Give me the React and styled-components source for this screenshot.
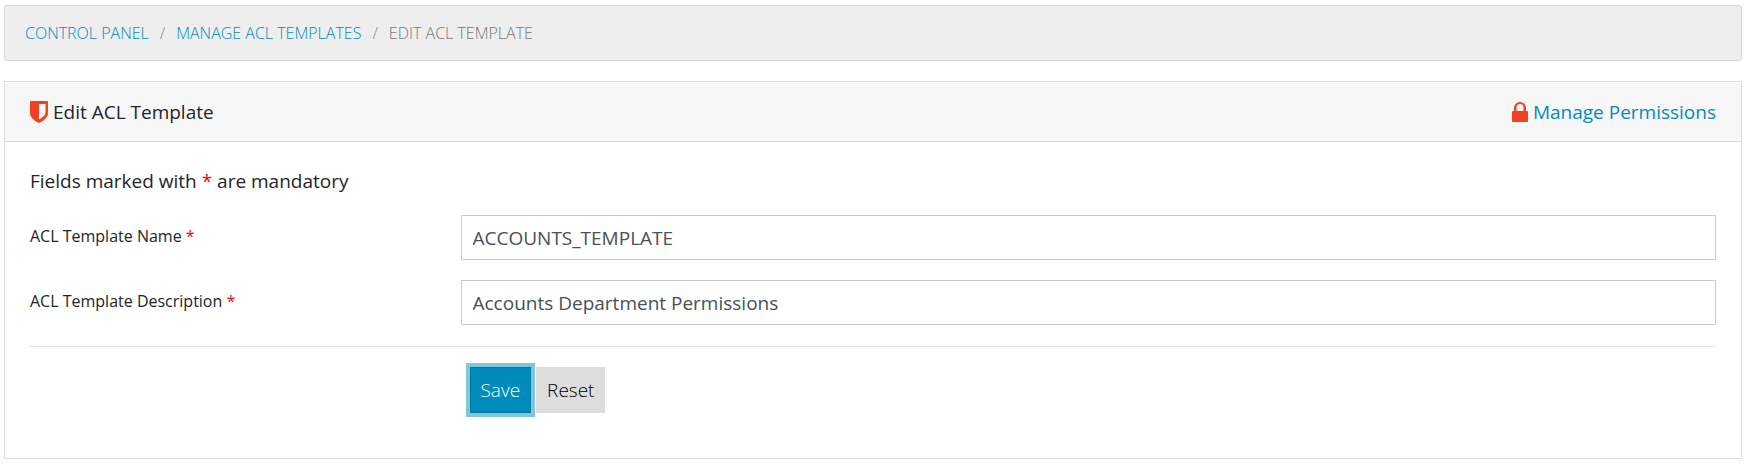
import styled, { createGlobalStyle } from 'styled-components';

const GlobalStyle = createGlobalStyle`
  * {
    box-sizing: border-box;
  }

  body {
    margin: 0;
    background: #fff;
    color: #212529;
    font-family: 'Open Sans', sans-serif;
    font-size: 19px;
    line-height: 30px;
  }

  a {
    color: #008cba;
    text-decoration: none;
  }
`;

const Page = styled.main`
  padding: 5px 6px 7px 4px;
`;

const Breadcrumb = styled.ol`
  display: flex;
  list-style: none;
  margin: 0 0 20px;
  padding: 15px 20px;
  background: #eee;
  border: 1px solid #d8d8d8;
  border-radius: 3px;
  font-size: 16px;
  font-weight: 300;
  line-height: 24px;
  text-transform: uppercase;
  color: #777;
`;

const Crumb = styled.li`
  & + &::before {
    content: '/';
    padding: 0 11px;
    color: #888;
  }
`;

const Panel = styled.section`
  border: 1px solid #ddd;
`;

const PanelHeader = styled.header`
  display: flex;
  justify-content: space-between;
  align-items: center;
  padding: 15px 25px 14px;
  background: #f7f7f7;
  border-bottom: 1px solid #d8d8d8;
  box-shadow: inset 0 1px 0 #fff;
`;

const Title = styled.h1`
  display: flex;
  align-items: center;
  gap: 5px;
  margin: 0;
  font-size: 19px;
  font-weight: 400;
`;

const HeaderLink = styled.a`
  display: flex;
  align-items: center;
  gap: 5px;
`;

const PanelBody = styled.form`
  padding: 24px 25px 25px;
`;

const Note = styled.p`
  margin: 0 0 19px;
`;

const Required = styled.span`
  color: #f00;
`;

const Row = styled.div`
  display: grid;
  grid-template-columns: 1fr 3fr;
  column-gap: 12px;
  align-items: start;
  margin-bottom: 20px;
`;

const Label = styled.label`
  padding-top: 9px;
  font-size: 16px;
  line-height: 24px;
`;

const Input = styled.input`
  width: 100%;
  height: 45px;
  padding: 0 11px;
  border: 1px solid #ccc;
  border-radius: 0;
  background: #fff;
  color: #495057;
  font: inherit;
`;

const Divider = styled.hr`
  margin: 21px 0 20px;
  border: 0;
  border-top: 1px solid #e5e5e5;
`;

const Actions = styled.div`
  grid-column: 2;
  display: flex;
  gap: 5px;
  padding-left: 9px;
`;

const Button = styled.button`
  height: 46px;
  padding: 0 10px;
  border: 1px solid ${({ $primary }) => ($primary ? '#0079a1' : '#ddd')};
  background: ${({ $primary }) => ($primary ? '#008cba' : '#ddd')};
  box-shadow: ${({ $primary }) => ($primary ? '0 0 0 4px #80c6dd' : 'none')};
  color: ${({ $primary }) => ($primary ? '#fff' : '#000')};
  font: inherit;
  font-weight: 300;
  cursor: pointer;
`;

const ShieldIcon = () => (
  <svg width="18" height="22" viewBox="0 0 18 22" fill="#f04124" aria-hidden="true">
    <path
      fillRule="evenodd"
      d="M1 0h16a1 1 0 0 1 1 1v11c0 4-3.500 7.500-9 10C3.500 19.500 0 16 0 12V1a1 1 0 0 1 1-1zM9 3v15.500c4-2.200 6.500-4.500 6.500-7V3z"
    />
  </svg>
);

const LockIcon = () => (
  <svg width="16" height="20" viewBox="0 0 16 20" fill="#f04124" aria-hidden="true">
    <path
      fillRule="evenodd"
      d="M2 9V6a6 6 0 0 1 12 0v3h1a1 1 0 0 1 1 1v9a1 1 0 0 1-1 1H1a1 1 0 0 1-1-1v-9a1 1 0 0 1 1-1zM4.500 9h7V5.500a3.500 3.500 0 0 0-7 0z"
    />
  </svg>
);

const crumbs = [
  { label: 'Control Panel', href: '#control-panel' },
  { label: 'Manage ACL Templates', href: '#acl-templates' },
  { label: 'Edit ACL Template' },
];

const fields = [
  { id: 'name', label: 'ACL Template Name', value: 'ACCOUNTS_TEMPLATE' },
  { id: 'description', label: 'ACL Template Description', value: 'Accounts Department Permissions' },
];

export default function App() {
  return (
    <>
      <GlobalStyle />
      <Page>
        <nav aria-label="Breadcrumb">
          <Breadcrumb>
            {crumbs.map(({ label, href }) => (
              <Crumb key={label}>{href ? <a href={href}>{label}</a> : label}</Crumb>
            ))}
          </Breadcrumb>
        </nav>

        <Panel>
          <PanelHeader>
            <Title>
              <ShieldIcon />
              Edit ACL Template
            </Title>
            <HeaderLink href="#permissions">
              <LockIcon />
              Manage Permissions
            </HeaderLink>
          </PanelHeader>

          <PanelBody onSubmit={(e) => e.preventDefault()}>
            <Note>
              Fields marked with <Required>*</Required> are mandatory
            </Note>
            {fields.map(({ id, label, value }) => (
              <Row key={id}>
                <Label htmlFor={id}>
                  {label} <Required>*</Required>
                </Label>
                <Input id={id} name={id} type="text" defaultValue={value} required />
              </Row>
            ))}
            <Divider />
            <Row>
              <Actions>
                <Button type="submit" $primary>Save</Button>
                <Button type="reset">Reset</Button>
              </Actions>
            </Row>
          </PanelBody>
        </Panel>
      </Page>
    </>
  );
}
